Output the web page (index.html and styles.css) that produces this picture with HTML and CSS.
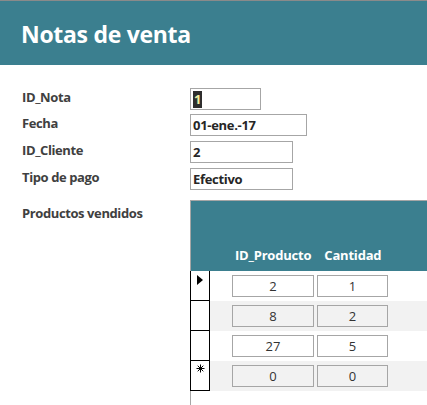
FILE: index.html
```html
<!DOCTYPE html>
<html lang="es">
<head>
<meta charset="utf-8">
<title>Notas de venta</title>
<link rel="stylesheet" href="styles.css">
</head>
<body>
<header class="form-header">
  <h1 class="form-title">Notas de venta</h1>
</header>
<main class="form-body">
  <div class="field-row row-nota">
    <span class="field-label">ID_Nota</span>
    <span class="field-box box-nota"><span class="sel">1</span></span>
  </div>
  <div class="field-row row-fecha">
    <span class="field-label">Fecha</span>
    <span class="field-box box-fecha">01-ene.-17</span>
  </div>
  <div class="field-row row-cliente">
    <span class="field-label">ID_Cliente</span>
    <span class="field-box box-cliente">2</span>
  </div>
  <div class="field-row row-pago">
    <span class="field-label">Tipo de pago</span>
    <span class="field-box box-pago">Efectivo</span>
  </div>
  <div class="sub-row">
    <span class="field-label sub-label">Productos vendidos</span>
    <div class="subform">
      <div class="sub-head">
        <span class="col-head col-prod">ID_Producto</span>
        <span class="col-head col-cant">Cantidad</span>
      </div>
      <div class="sub-rec">
        <span class="rec-sel"><span class="arrow"></span></span>
        <span class="cell cell-prod">2</span>
        <span class="cell cell-cant">1</span>
      </div>
      <div class="sub-rec alt">
        <span class="rec-sel"></span>
        <span class="cell cell-prod">8</span>
        <span class="cell cell-cant">2</span>
      </div>
      <div class="sub-rec">
        <span class="rec-sel"></span>
        <span class="cell cell-prod">27</span>
        <span class="cell cell-cant">5</span>
      </div>
      <div class="sub-rec alt">
        <span class="rec-sel">
          <svg class="star" width="9" height="9" viewBox="0 0 9 9" aria-hidden="true">
            <path d="M4.5 0.5V8.5M0.5 4.5H8.5M1.7 1.7L7.3 7.3M7.3 1.7L1.7 7.3" stroke="#000" stroke-width="1" fill="none"/>
          </svg>
        </span>
        <span class="cell cell-prod">0</span>
        <span class="cell cell-cant">0</span>
      </div>
      <div class="sub-tail"></div>
    </div>
  </div>
</main>
</body>
</html>
```
FILE: styles.css
```css
* { box-sizing: border-box; }
html, body { margin: 0; padding: 0; background: #fff; }
body {
  font-family: "Open Sans", "Noto Sans", "Liberation Sans", sans-serif;
  color: #3a3a3a;
  width: 427px;
  overflow: hidden;
}
.form-header {
  height: 65px;
  border-top: 1px solid #8a8a8a;
  background: #3b7f8f;
  display: flex;
  align-items: center;
  padding-left: 21px;
}
.form-title {
  margin: 0;
  color: #fff;
  font-size: 23px;
  font-weight: 700;
  letter-spacing: -0.3px;
  line-height: 1;
  padding-top: 3px;
}
.form-body {
  padding-top: 23px;
}
.field-row {
  display: flex;
  align-items: center;
  height: 22px;
}
.row-fecha { margin-top: 4px; }
.row-cliente { margin-top: 5px; }
.row-pago { margin-top: 5px; }
.field-label {
  width: 190px;
  padding-left: 22px;
  font-size: 13px;
  font-weight: 700;
  color: #404040;
  letter-spacing: -0.4px;
  margin-top: -4px;
}
.field-box {
  height: 22px;
  border: 1px solid #a6a6a6;
  padding-left: 2px;
  font-size: 13px;
  font-weight: 700;
  color: #262626;
  letter-spacing: -0.3px;
  display: flex;
  align-items: center;
}
.box-nota { width: 71px; }
.box-fecha { width: 117px; }
.box-cliente { width: 103px; }
.box-pago { width: 103px; }
.sel {
  background: #2e2e2e;
  color: #f4f0a0;
  padding: 0 1px;
  line-height: 17px;
}
.sub-row {
  display: flex;
  margin-top: 10px;
}
.sub-label {
  margin-top: 4px;
  align-self: flex-start;
}
.subform {
  flex: 1;
  border-top: 1px solid #a6a6a6;
  border-left: 1px solid #a6a6a6;
}
.sub-head {
  height: 70px;
  background: #3b7f8f;
  display: flex;
  align-items: flex-end;
  padding-bottom: 7px;
  padding-left: 44px;
}
.col-head {
  color: #fff;
  font-size: 13px;
  font-weight: 700;
  letter-spacing: -0.2px;
}
.col-cant { margin-left: 13px; }
.sub-rec {
  display: flex;
  align-items: center;
  height: 30px;
}
.sub-rec.alt { background: #f2f2f2; }
.rec-sel {
  align-self: stretch;
  width: 20px;
  margin-left: -1px;
  border: 1px solid #000;
  border-top: none;
  background: #fff;
  position: relative;
}
.arrow {
  position: absolute;
  left: 6px;
  top: 4px;
  width: 0;
  height: 0;
  border-top: 5px solid transparent;
  border-bottom: 5px solid transparent;
  border-left: 6px solid #000;
}
.star {
  position: absolute;
  left: 5px;
  top: 3px;
  display: block;
}
.cell {
  height: 22px;
  border: 1px solid #a6a6a6;
  font-size: 13px;
  color: #333;
  display: flex;
  align-items: center;
  justify-content: center;
}
.cell-prod { width: 82px; margin-left: 22px; }
.cell-cant { width: 71px; margin-left: 3px; }
.sub-tail { height: 20px; }
```
